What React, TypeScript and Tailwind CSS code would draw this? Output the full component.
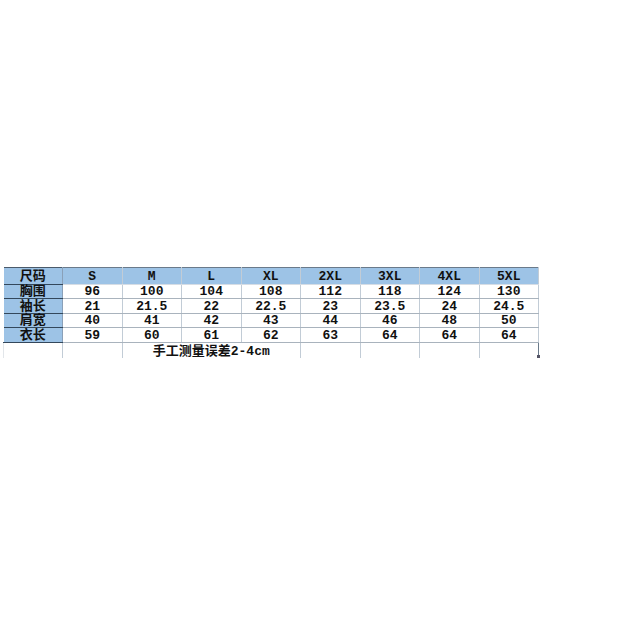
import React from "react";

const sizes = ["S", "M", "L", "XL", "2XL", "3XL", "4XL", "5XL"];
const rows: [string, string[]][] = [
  ["胸围", ["96", "100", "104", "108", "112", "118", "124", "130"]],
  ["袖长", ["21", "21.5", "22", "22.5", "23", "23.5", "24", "24.5"]],
  ["肩宽", ["40", "41", "42", "43", "44", "46", "48", "50"]],
  ["衣长", ["59", "60", "61", "62", "63", "64", "64", "64"]],
];

const font = { fontFamily: '"Liberation Mono", "Noto Sans CJK SC", monospace' };

export default function App() {
  return (
    <div className="w-[620px] h-[620px] bg-white relative">
      <div className="pt-[267px] pl-[3px]">
        <table className="border-collapse text-[13px] font-bold text-[#111]" style={font}>
          <tbody>
            <tr className="h-[17px]">
              <td className="w-[59px] p-0 bg-[#9dc3e6] border-t border-t-[#4a5a6a] border-b border-b-[#33475b] border-r border-r-[#8aa0b8] text-center leading-none">尺码</td>
              {sizes.map((s) => (
                <td key={s} className="w-[59.5px] p-0 bg-[#9dc3e6] border-t border-t-[#6a7a8a] border-b border-b-[#d6dde5] border-r border-r-[#c2ccd6] text-center leading-none">{s}</td>
              ))}
            </tr>
            {rows.map(([label, vals], i) => (
              <tr key={label} className={i % 2 === 0 ? "h-[14px]" : "h-[15px]"}>
                <td className="p-0 bg-[#9dc3e6] border-b border-b-[#33475b] border-r border-r-[#8aa0b8] text-center leading-none">{label}</td>
                {vals.map((v, j) => (
                  <td key={j} className="p-0 bg-white border-b border-b-[#a9b3bd] border-r border-r-[#c2ccd6] text-center leading-none">{v}</td>
                ))}
              </tr>
            ))}
            <tr className="h-[15px]">
              <td className="p-0 border-l border-l-[#e2e6ea] border-r border-r-[#c2ccd6]"></td>
              <td className="p-0 border-r border-r-[#c2ccd6]"></td>
              <td colSpan={3} className="p-0 border-r border-r-[#c2ccd6] text-center leading-none align-bottom">手工测量误差2-4cm</td>
              <td className="p-0 border-r border-r-[#c2ccd6]"></td>
              <td className="p-0 border-r border-r-[#c2ccd6]"></td>
              <td className="p-0 border-r border-r-[#c2ccd6]"></td>
              <td className="p-0 border-r border-r-[#6a7a8a]"></td>
            </tr>
          </tbody>
        </table>
      </div>
      <div className="absolute left-[537px] top-[355px] w-[3px] h-[3px] bg-[#556]"></div>
    </div>
  );
}
